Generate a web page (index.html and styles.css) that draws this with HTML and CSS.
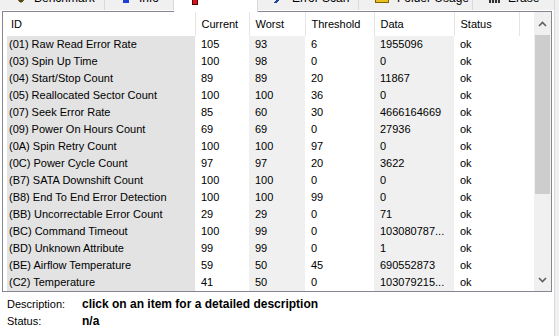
FILE: index.html
```html
<!DOCTYPE html>
<html>
<head>
<meta charset="utf-8">
<link rel="stylesheet" href="styles.css">
</head>
<body>
<div class="tabs">
  <div class="tab t1"><span class="ico ico-bench"></span>Benchmark</div>
  <div class="tab t2"><span class="ico ico-info"></span>Info</div>
  <div class="tab t3 active"><span class="ico ico-health"></span>Health</div>
  <div class="tab t4"><span class="ico ico-err"></span>Error Scan</div>
  <div class="tab t5"><span class="ico ico-folder"></span>Folder Usage</div>
  <div class="tab t6"><span class="ico ico-erase"></span>Erase</div>
</div>
<div class="panel">
  <div class="listbox">
    <div class="listwrap">
      <table class="grid">
        <colgroup>
          <col class="c-id"><col class="c-cur"><col class="c-worst"><col class="c-thr"><col class="c-data"><col class="c-stat"><col class="c-fill">
        </colgroup>
        <thead>
          <tr><th class="id">ID</th><th>Current</th><th>Worst</th><th>Threshold</th><th>Data</th><th>Status</th><th class="fill"></th></tr>
        </thead>
        <tbody>
          <tr><td class="id">(01) Raw Read Error Rate</td><td>105</td><td class="g">93</td><td>6</td><td class="g">1955096</td><td>ok</td><td></td></tr>
          <tr><td class="id">(03) Spin Up Time</td><td>100</td><td class="g">98</td><td>0</td><td class="g">0</td><td>ok</td><td></td></tr>
          <tr><td class="id">(04) Start/Stop Count</td><td>89</td><td class="g">89</td><td>20</td><td class="g">11867</td><td>ok</td><td></td></tr>
          <tr><td class="id">(05) Reallocated Sector Count</td><td>100</td><td class="g">100</td><td>36</td><td class="g">0</td><td>ok</td><td></td></tr>
          <tr><td class="id">(07) Seek Error Rate</td><td>85</td><td class="g">60</td><td>30</td><td class="g">4666164669</td><td>ok</td><td></td></tr>
          <tr><td class="id">(09) Power On Hours Count</td><td>69</td><td class="g">69</td><td>0</td><td class="g">27936</td><td>ok</td><td></td></tr>
          <tr><td class="id">(0A) Spin Retry Count</td><td>100</td><td class="g">100</td><td>97</td><td class="g">0</td><td>ok</td><td></td></tr>
          <tr><td class="id">(0C) Power Cycle Count</td><td>97</td><td class="g">97</td><td>20</td><td class="g">3622</td><td>ok</td><td></td></tr>
          <tr><td class="id">(B7) SATA Downshift Count</td><td>100</td><td class="g">100</td><td>0</td><td class="g">0</td><td>ok</td><td></td></tr>
          <tr><td class="id">(B8) End To End Error Detection</td><td>100</td><td class="g">100</td><td>99</td><td class="g">0</td><td>ok</td><td></td></tr>
          <tr><td class="id">(BB) Uncorrectable Error Count</td><td>29</td><td class="g">29</td><td>0</td><td class="g">71</td><td>ok</td><td></td></tr>
          <tr><td class="id">(BC) Command Timeout</td><td>100</td><td class="g">99</td><td>0</td><td class="g">103080787...</td><td>ok</td><td></td></tr>
          <tr><td class="id">(BD) Unknown Attribute</td><td>99</td><td class="g">99</td><td>0</td><td class="g">1</td><td>ok</td><td></td></tr>
          <tr><td class="id">(BE) Airflow Temperature</td><td>59</td><td class="g">50</td><td>45</td><td class="g">690552873</td><td>ok</td><td></td></tr>
          <tr><td class="id">(C2) Temperature</td><td>41</td><td class="g">50</td><td>0</td><td class="g">103079215...</td><td>ok</td><td></td></tr>
        </tbody>
      </table>
    </div>
    <div class="scrollbar">
      <div class="sb-btn"><svg width="9" height="6" viewBox="0 0 9 6"><path d="M1 5 L4.5 1.5 L8 5" fill="none" stroke="#606060" stroke-width="1.6"/></svg></div>
      <div class="sb-track"><div class="sb-thumb"></div></div>
      <div class="sb-btn"><svg width="9" height="6" viewBox="0 0 9 6"><path d="M1 1 L4.5 4.5 L8 1" fill="none" stroke="#606060" stroke-width="1.6"/></svg></div>
    </div>
  </div>
  <div class="info">
    <div class="info-row"><span class="lbl">Description:</span><span class="val">click on an item for a detailed description</span></div>
    <div class="info-row"><span class="lbl">Status:</span><span class="val">n/a</span></div>
  </div>
</div>
</body>
</html>
```
FILE: styles.css
```css
* { box-sizing: border-box; }
html, body { margin: 0; padding: 0; }
body {
  width: 559px;
  height: 336px;
  overflow: hidden;
  background: #f0f0f0;
  font-family: "Liberation Sans", Arial, sans-serif;
  font-size: 11px;
  color: #000;
}
.tabs {
  display: flex;
  height: 10px;
  padding-left: 0;
  overflow: visible;
  position: relative;
}
.tab {
  height: 20px;
  margin-top: -10px;
  display: flex;
  align-items: flex-end;
  padding-bottom: 6px;
  background: #f0f0f0;
  border: 1px solid #d9d9d9;
  border-bottom: none;
  white-space: nowrap;
  font-size: 12px;
  line-height: 12px;
}
.t1 { width: 106px; padding-left: 16px; margin-left: -1px; }
.t2 { width: 69px; padding-left: 16px; border-left: none; }
.t3 { width: 84px; padding-left: 16px; background: #fff; height: 22px; border-left: none; color: transparent; }
.t4 { width: 101px; padding-left: 16px; border-left: none; }
.t5 { width: 114px; padding-left: 16px; border-left: none; }
.t6 { width: 82px; padding-left: 16px; border-left: none; }
.ico { display: inline-block; width: 10px; height: 8px; margin-right: 8px; margin-bottom: 1px; flex: none; }
.ico-bench { background: radial-gradient(circle at 50% 60%, #5a4a10 0 2.5px, transparent 3px); }
.ico-info { background: #1e3fd6; width: 6px; margin-left: 2px; margin-right: 10px; }
.ico-health { background: #e01010; width: 6px; border: 1px solid #400; margin-left: 2px; }
.ico-err { background: linear-gradient(135deg, transparent 40%, #1a3fa0 40% 60%, transparent 60%); }
.ico-folder { background: #e8c020; border: 1px solid #806000; width: 14px; }
.ico-erase { background: repeating-linear-gradient(90deg, #333 0 2px, #ddd 2px 3px); width: 11px; }

.panel {
  background: #fff;
  border: 1px solid #d9d9d9;
  margin: -1px 4px 0 -1px;
  height: 330px;
  padding: 1px 0 0 2px;
}
.listbox {
  display: flex;
  border: 1px solid #828790;
  height: 281px;
  width: 550px;
  background: #fff;
}
.listwrap { flex: 1; overflow: hidden; }
.grid {
  border-collapse: collapse;
  table-layout: fixed;
  width: 531px;
}
.c-id { width: 190px; }
.c-cur { width: 54px; }
.c-worst { width: 56px; }
.c-thr { width: 69px; }
.c-data { width: 80px; }
.c-stat { width: 65px; }
.c-fill { width: 17px; }
th {
  height: 24px;
  font-weight: normal;
  text-align: left;
  padding: 0 0 0 6px;
  border-right: 1px solid #e5e5e5;
  vertical-align: middle;
  white-space: nowrap;
  color: #000;
}
th.id { padding-left: 6px; }
th.fill { border-right: none; }
td {
  height: 17px;
  padding: 0 0 0 6px;
  white-space: nowrap;
  overflow: hidden;
  line-height: 17px;
}
td.id {
  background: #e3e3e3;
  border-left: 4px solid #fff;
  padding-left: 2px;
}
td.g { background: #f0f0f0; }
.scrollbar {
  width: 17px;
  background: #f0f0f0;
  display: flex;
  flex-direction: column;
}
.sb-btn {
  height: 23px;
  display: flex;
  align-items: center;
  justify-content: center;
}
.sb-track { flex: 1; padding: 0 1px; }
.sb-thumb { height: 159px; background: #cdcdcd; }
.info { padding: 4px 0 0 5px; }
.info-row { display: flex; height: 17px; line-height: 17px; }
.lbl { width: 75px; color: #000; }
.val { font-weight: bold; font-size: 12px; }
```
